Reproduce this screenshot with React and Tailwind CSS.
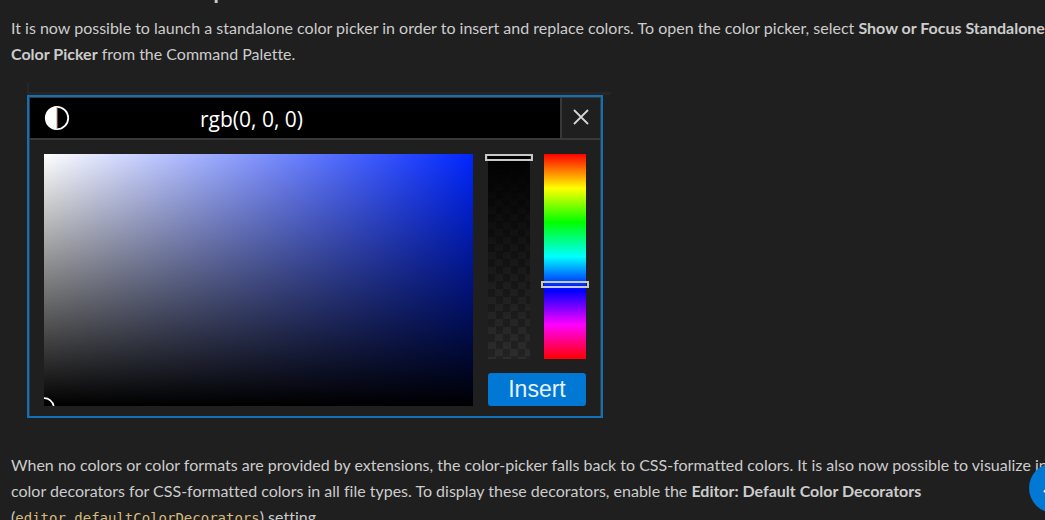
import React, { useState } from "react";

const PROSE = "text-[16px] leading-[26px] whitespace-nowrap [font-variant-ligatures:none]";

function ColorPicker() {
  const [alpha, setAlpha] = useState(0);
  const [hue, setHue] = useState(64);
  const slider =
    "m-0 -ml-[3px] h-full w-12 cursor-pointer appearance-none bg-transparent outline-none [writing-mode:vertical-lr] [&::-webkit-slider-thumb]:h-[7px] [&::-webkit-slider-thumb]:w-12 [&::-webkit-slider-thumb]:appearance-none [&::-webkit-slider-thumb]:border-2 [&::-webkit-slider-thumb]:border-[#c8c8c8] [&::-webkit-slider-thumb]:bg-transparent";
  return (
    <section
      aria-label="Standalone color picker"
      className="w-full max-w-[576px] border-2 border-[#1070b8] bg-[#1f1f1f]"
    >
      <div className="border border-b-0 border-[#383838]">
        <header className="flex h-[42px] border-b-2 border-[#383838]">
          <div className="flex flex-1 items-center bg-black text-white">
            <button aria-label="Toggle color theme" className="ml-[14px] flex">
              <svg width="26" height="26" viewBox="0 0 26 26">
                <circle cx="13" cy="13" r="11.2" fill="none" stroke="#fff" strokeWidth="1.8" />
                <path d="M13 1.5a11.5 11.5 0 0 0 0 23z" fill="#fff" />
                <path d="M13 2v22" stroke="#c98f80" strokeWidth="1" />
              </svg>
            </button>
            <button className="ml-[130px] pt-[2px] font-['Open_Sans',sans-serif] text-[21px] leading-7">
              rgb(0, 0, 0)
            </button>
          </div>
          <button
            aria-label="Close"
            className="flex w-10 items-center justify-center border-l-2 border-[#383838]"
          >
            <svg width="16" height="18" viewBox="0 0 16 18" stroke="#d4d4d4" strokeWidth="1.8">
              <path d="M1 1l14 14M15 1L1 15" />
            </svg>
          </button>
        </header>
        <div className="flex gap-[15px] px-[14px] pt-[14px] pb-[10px]">
          <div className="flex h-[252px] flex-1 items-end bg-[linear-gradient(to_top,#000,transparent),linear-gradient(to_right,#fff,#0026ff)]">
            <svg width="11" height="9" viewBox="0 0 11 9">
              <path d="M0 1.2A9.5 9.5 0 0 1 9.7 9" fill="none" stroke="#fff" strokeWidth="1.7" />
            </svg>
          </div>
          <div className="flex w-[98px] flex-col justify-between">
            <div className="flex h-[205px] justify-between">
              <div className="h-full w-[42px] bg-[linear-gradient(to_bottom,#000,transparent),repeating-conic-gradient(#2d2d2d_0%_25%,#222222_0%_50%)] bg-[length:100%_100%,15px_15px]">
                <input
                  type="range"
                  aria-label="Opacity"
                  value={alpha}
                  onChange={(e) => setAlpha(Number(e.target.value))}
                  className={slider}
                />
              </div>
              <div className="h-full w-[42px] bg-[linear-gradient(to_bottom,#f00,#ff0,#0f0,#0ff,#00f,#f0f,#f00)]">
                <input
                  type="range"
                  aria-label="Hue"
                  value={hue}
                  onChange={(e) => setHue(Number(e.target.value))}
                  className={slider}
                />
              </div>
            </div>
            <button className="h-[33px] rounded-[3px] bg-[#0078d4] font-['Liberation_Sans',sans-serif] text-[23px] leading-[33px] text-[#e8f2fa]">
              Insert
            </button>
          </div>
        </div>
      </div>
    </section>
  );
}

export default function App() {
  return (
    <main className="h-screen overflow-hidden bg-[#1f1f1f] pl-[11px] font-['Lato',sans-serif] text-[#cccccc]">
      <h3 className="-mt-[26px] h-[28px] font-['Open_Sans',sans-serif] text-[24px] leading-[28px] font-semibold whitespace-nowrap">
        Standalone color picker
      </h3>
      <p className={`mt-[13px] ${PROSE}`}>
        It is now possible to launch a standalone color picker in order to insert and replace
        colors. To open the color picker, select <strong>Show or Focus Standalone</strong>
        <br />
        <strong>Color Picker</strong> from the Command Palette.
      </p>
      <div className="mt-[16px] ml-4">
        <div className="h-[12px] max-w-[584px] border-b-3 border-l-2 border-[#262626]" />
        <ColorPicker />
      </div>
      <p className={`mt-[34px] ${PROSE}`}>
        When no colors or color formats are provided by extensions, the color-picker falls back to
        CSS-formatted colors. It is also now possible to visualize inline
        <br />
        color decorators for CSS-formatted colors in all file types. To display these decorators,
        enable the <strong>Editor: Default Color Decorators</strong>
        <br />(
        <code className="font-['DejaVu_Sans_Mono',monospace] text-[14px] text-[#d7ba7d]">
          editor.defaultColorDecorators
        </code>
        ) setting.
      </p>
      <button
        aria-label="Back to top"
        className="fixed -right-[34px] bottom-[7px] flex size-[50px] items-center justify-center rounded-full bg-[#0078d4] text-white"
      >
        <svg width="22" height="22" viewBox="0 0 22 22" fill="none" stroke="currentColor" strokeWidth="2">
          <path d="M1 15l10-10 10 10" />
        </svg>
      </button>
    </main>
  );
}
